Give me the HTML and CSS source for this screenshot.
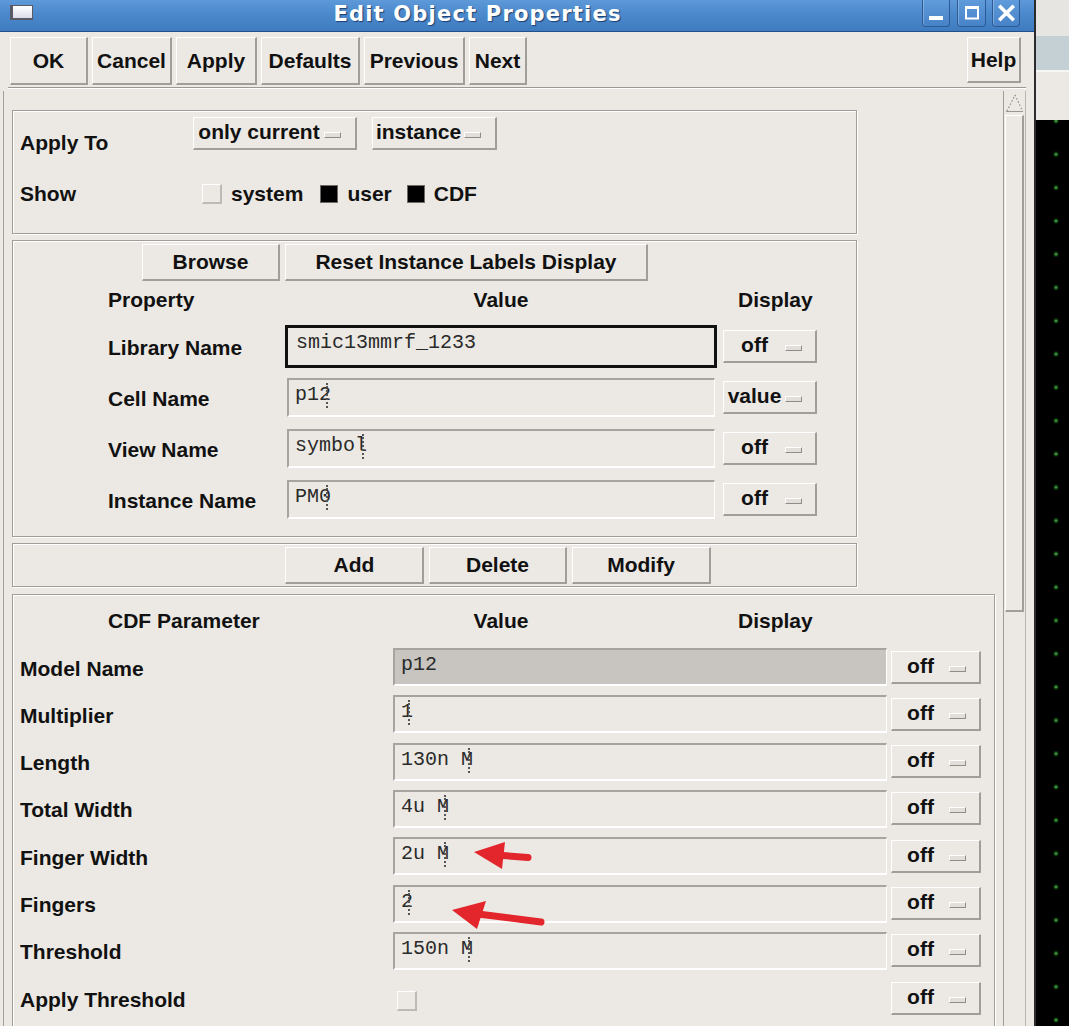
FILE: index.html
```html
<!DOCTYPE html>
<html>
<head>
<meta charset="utf-8">
<title>Edit Object Properties</title>
<link rel="stylesheet" href="styles.css">
</head>
<body>
<div class="screen">
  <div class="window">
    <div class="titlebar">
      <div class="win-icon"></div>
      <div class="title">Edit Object Properties</div>
      <div class="wm-btns">
        <div class="wm-btn wm-min"><svg width="27" height="27" viewBox="0 0 27 27"><rect x="6" y="16" width="14" height="4" fill="#fff"/></svg></div>
        <div class="wm-btn wm-max"><svg width="28" height="27" viewBox="0 0 28 27"><rect x="8" y="7.5" width="12" height="11" fill="none" stroke="#fff" stroke-width="2"/><rect x="7" y="6" width="14" height="3" fill="#fff"/></svg></div>
        <div class="wm-btn wm-close"><svg width="27" height="27" viewBox="0 0 27 27"><path d="M7.5 7 L19.5 19 M19.5 7 L7.5 19" stroke="#fff" stroke-width="3.6" stroke-linecap="square"/></svg></div>
      </div>
    </div>

    <div class="toolbar">
      <div class="btn tb b-ok">OK</div>
      <div class="btn tb b-cancel">Cancel</div>
      <div class="btn tb b-apply">Apply</div>
      <div class="btn tb b-def">Defaults</div>
      <div class="btn tb b-prev">Previous</div>
      <div class="btn tb b-next">Next</div>
      <div class="spacer"></div>
      <div class="btn tb b-help">Help</div>
    </div>

    <div class="scrollarea">
      <div class="viewport">

        <div class="frame f1">
          <div class="apply-row">
            <div class="lbl lbl-apply">Apply To</div>
            <div class="opt opt-only"><span class="opt-text">only current</span><span class="ind"></span></div>
            <div class="opt opt-inst"><span class="opt-text">instance</span><span class="ind"></span></div>
          </div>
          <div class="show-row">
            <div class="lbl lbl-show">Show</div>
            <span class="chk chk-first"></span>
            <span class="chk-text">system</span>
            <span class="chk on on-user"></span>
            <span class="chk-text">user</span>
            <span class="chk on on-cdf"></span>
            <span class="chk-text">CDF</span>
          </div>
        </div>

        <div class="frame f2">
          <div class="btnrow2">
            <div class="btn b-browse">Browse</div>
            <div class="btn b-reset">Reset Instance Labels Display</div>
          </div>
          <div class="hdr">
            <div class="h1">Property</div>
            <div class="h2">Value</div>
            <div class="h3">Display</div>
          </div>
          <div class="pgrid">
            <div class="lbl">Library Name</div>
            <div class="fld focus">smic13mmrf_1233</div>
            <div class="opt opt-disp"><span class="opt-text">off</span><span class="ind"></span></div>

            <div class="lbl">Cell Name</div>
            <div class="fld">p12<span class="cur"></span></div>
            <div class="opt opt-disp"><span class="opt-text">value</span><span class="ind"></span></div>

            <div class="lbl">View Name</div>
            <div class="fld">symbol<span class="cur"></span></div>
            <div class="opt opt-disp"><span class="opt-text">off</span><span class="ind"></span></div>

            <div class="lbl">Instance Name</div>
            <div class="fld">PM0<span class="cur"></span></div>
            <div class="opt opt-disp"><span class="opt-text">off</span><span class="ind"></span></div>
          </div>
        </div>

        <div class="frame f3">
          <div class="btn b-add">Add</div>
          <div class="btn b-del">Delete</div>
          <div class="btn b-mod">Modify</div>
        </div>

        <div class="frame f4">
          <div class="hdr hdr4">
            <div class="h1">CDF Parameter</div>
            <div class="h2">Value</div>
            <div class="h3">Display</div>
          </div>
          <div class="cgrid">
            <div class="lbl">Model Name</div>
            <div class="fld disabled">p12</div>
            <div class="opt opt-cdf"><span class="opt-text">off</span><span class="ind"></span></div>

            <div class="lbl">Multiplier</div>
            <div class="fld">1<span class="cur"></span></div>
            <div class="opt opt-cdf"><span class="opt-text">off</span><span class="ind"></span></div>

            <div class="lbl">Length</div>
            <div class="fld">130n M<span class="cur"></span></div>
            <div class="opt opt-cdf"><span class="opt-text">off</span><span class="ind"></span></div>

            <div class="lbl">Total Width</div>
            <div class="fld">4u M<span class="cur"></span></div>
            <div class="opt opt-cdf"><span class="opt-text">off</span><span class="ind"></span></div>

            <div class="lbl">Finger Width</div>
            <div class="fld">2u M<span class="cur"></span></div>
            <div class="opt opt-cdf"><span class="opt-text">off</span><span class="ind"></span></div>

            <div class="lbl">Fingers</div>
            <div class="fld">2<span class="cur"></span></div>
            <div class="opt opt-cdf"><span class="opt-text">off</span><span class="ind"></span></div>

            <div class="lbl">Threshold</div>
            <div class="fld">150n M<span class="cur"></span></div>
            <div class="opt opt-cdf"><span class="opt-text">off</span><span class="ind"></span></div>

            <div class="lbl">Apply Threshold</div>
            <div class="chk-cell"><span class="chk"></span></div>
            <div class="opt opt-cdf"><span class="opt-text">off</span><span class="ind"></span></div>
          </div>
        </div>

      </div>
      <div class="vscroll">
        <div class="arrow-up">
          <svg width="19" height="20" viewBox="0 0 19 20"><path d="M10 2 L17.5 18 M2 18 L10 2" stroke="#8f8c87" stroke-width="1.2" stroke-dasharray="1.5 2" fill="none"/><path d="M1 18.5 H18" stroke="#9a9792" stroke-width="1"/></svg>
        </div>
        <div class="thumb"></div>
      </div>
    </div>
  </div>

  <div class="side">
    <div class="s-a"></div>
    <div class="s-b"></div>
    <div class="s-c"></div>
    <div class="s-d"></div>
  </div>
</div>

<svg class="overlay" width="1069" height="1026" viewBox="0 0 1069 1026">
  <line x1="528" y1="857.5" x2="496" y2="855" stroke="#e3262b" stroke-width="7" stroke-linecap="round"/>
  <polygon points="474,852 505,842 502,869" fill="#e3262b"/>
  <line x1="541" y1="922" x2="478" y2="914" stroke="#e3262b" stroke-width="7" stroke-linecap="round"/>
  <polygon points="452,910 486,901 477,929" fill="#e3262b"/>
</svg>
</body>
</html>
```

FILE: styles.css
```css
* { box-sizing: border-box; }

html, body {
  margin: 0;
  padding: 0;
}

body {
  width: 1069px;
  height: 1026px;
  overflow: hidden;
  background: #000;
  position: relative;
  font-family: "Liberation Sans", Arial, sans-serif;
  color: #111;
}

.screen {
  display: flex;
  width: 1069px;
  height: 1026px;
}

.window {
  width: 1036px;
  flex: none;
  display: flex;
  flex-direction: column;
  background: #ece9e4;
  border-right: 2px solid #2b2b2b;
  overflow: hidden;
}

/* ---------- title bar ---------- */
.titlebar {
  height: 32px;
  flex: none;
  display: flex;
  align-items: flex-start;
  background: linear-gradient(#5e9ad9 0%, #4b88cc 45%, #3f7bbf 100%);
  border-bottom: 1px solid #24508a;
}

.win-icon {
  margin: 5px 0 0 10px;
  width: 23px;
  height: 15px;
  background: linear-gradient(#ffffff, #dcdcec);
  border: 1px solid #5a5a66;
  border-left-width: 3px;
  border-bottom-width: 2px;
}

.title {
  flex: 1;
  text-align: center;
  color: #fff;
  font-family: "DejaVu Sans", "Liberation Sans", sans-serif;
  font-weight: bold;
  font-size: 21px;
  letter-spacing: 1.2px;
  line-height: 28px;
  text-shadow: 1px 1px 1px #1c3f6e;
}

.wm-btns {
  display: flex;
  margin-right: 14px;
}

.wm-btn {
  height: 27px;
  border: 1px solid #2c5a95;
  border-top: none;
  border-radius: 0 0 4px 4px;
  background: linear-gradient(#609cdb, #4682c6);
  box-shadow: inset 1px 0 0 rgba(255, 255, 255, 0.25);
}

.wm-btn svg { display: block; }

.wm-min { width: 28px; }
.wm-max { width: 29px; margin-left: 7px; }
.wm-close { width: 28px; margin-left: 6px; }

/* ---------- buttons ---------- */
.btn {
  display: flex;
  align-items: center;
  justify-content: center;
  border-style: solid;
  border-width: 1px 2px 2px 1px;
  border-color: #fff #a19e99 #a19e99 #fff;
  background: #ece9e4;
  font-weight: bold;
  font-size: 21px;
  color: #111;
  white-space: nowrap;
}

.toolbar {
  flex: none;
  display: flex;
  gap: 4px;
  margin: 0 8px;
  padding: 5px 5px 2px 2px;
  border-bottom: 1px solid #9c9994;
  box-shadow: 0 1px 0 #fff;
}

.tb { height: 48px; }
.b-ok { width: 78px; }
.b-cancel { width: 80px; }
.b-apply { width: 81px; }
.b-def { width: 99px; }
.b-prev { width: 101px; }
.b-next { width: 58px; }
.b-help { width: 54px; height: 46px; }

.spacer { flex: 1; }

/* ---------- scroll area ---------- */
.scrollarea {
  flex: 1;
  min-height: 0;
  display: flex;
  margin-top: 3px;
  padding-right: 8px;
}

.viewport {
  flex: 1;
  min-width: 0;
  overflow: hidden;
  margin-left: 3px;
  border-left: 1px solid #a3a09b;
  padding: 19px 0 0 8px;
}

.vscroll {
  width: 23px;
  flex: none;
  border-left: 1px solid #a09d98;
  border-right: 1px solid #b9b6b1;
  padding: 2px 1px;
  display: flex;
  flex-direction: column;
  gap: 2px;
}

.arrow-up {
  height: 20px;
}

.arrow-up svg { display: block; }

.thumb {
  height: 497px;
  border-style: solid;
  border-width: 1px 2px 2px 1px;
  border-color: #fff #a19e99 #a19e99 #fff;
}

/* ---------- frames ---------- */
.frame {
  border: 1px solid #a19e99;
  box-shadow: inset 1px 1px 0 #fff, 1px 1px 0 #fff;
}

.lbl {
  font-weight: bold;
  font-size: 21px;
  line-height: 22px;
  white-space: nowrap;
}

.f1 {
  width: 845px;
  height: 124px;
  padding: 6px 0 0 7px;
  margin-bottom: 6px;
}

.apply-row {
  display: flex;
  align-items: flex-start;
}

.lbl-apply {
  width: 173px;
  margin-top: 15px;
}

.show-row {
  display: flex;
  align-items: center;
  margin-top: 28px;
}

.lbl-show { width: 173px; }

.chk {
  display: inline-block;
  width: 20px;
  height: 20px;
  border-style: solid;
  border-width: 1px 2px 2px 1px;
  border-color: #fff #bdbab5 #bdbab5 #fff;
  background: #ece9e4;
  flex: none;
}

.chk.on {
  width: 18px;
  height: 18px;
  background: #000;
  border: 1px solid #6d6a66;
}

.chk-first { margin-left: 9px; }
.on-user { margin-left: 17px; }
.on-cdf { margin-left: 15px; }

.chk-text {
  font-weight: bold;
  font-size: 21px;
  margin-left: 9px;
}

/* option menu buttons */
.opt {
  height: 33px;
  display: flex;
  align-items: center;
  border-style: solid;
  border-width: 1px 2px 2px 1px;
  border-color: #fff #a19e99 #a19e99 #fff;
  font-weight: bold;
  font-size: 21px;
  white-space: nowrap;
}

.opt-text {
  flex: 1;
  text-align: center;
  line-height: 22px;
  margin-top: -2px;
}

.ind {
  flex: none;
  width: 17px;
  height: 6px;
  margin: 4px 13px 0 0;
  border-style: solid;
  border-width: 1px;
  border-color: #fff #8f8c87 #8f8c87 #fff;
  background: #e2dfda;
}

.opt-only { width: 164px; }
.opt-only .ind { margin-right: 14px; }
.opt-inst { width: 125px; margin-left: 15px; }
.opt-inst .ind { margin-right: 14px; }

/* frame 2 */
.f2 {
  width: 845px;
  height: 297px;
  padding-top: 3px;
  margin-bottom: 6px;
}

.btnrow2 {
  display: flex;
  gap: 5px;
  margin-left: 129px;
}

.b-browse { width: 138px; height: 37px; }
.b-reset { width: 363px; height: 37px; }

.hdr {
  display: flex;
  margin-top: 9px;
  padding-left: 95px;
  height: 20px;
  line-height: 20px;
  font-weight: bold;
  font-size: 21px;
  white-space: nowrap;
}

.hdr .h1 { width: 179px; }
.hdr .h2 { width: 428px; text-align: center; }
.hdr .h3 { padding-left: 23px; }

.pgrid {
  display: grid;
  grid-template-columns: 171px 428px 94px;
  grid-auto-rows: 39px;
  column-gap: 8px;
  row-gap: 12px;
  align-items: center;
  padding-left: 95px;
  margin-top: 17px;
}

.pgrid .lbl { margin-top: 3px; }

/* text fields */
.fld {
  height: 39px;
  border-style: solid;
  border-width: 2px 1px 2px 2px;
  border-color: #a7a49f #fff #fff #a7a49f;
  background: #ece9e4;
  font-family: "Liberation Mono", "Courier New", monospace;
  font-size: 20px;
  line-height: 24px;
  color: #2a2a2a;
  padding: 3px 0 0 6px;
  white-space: nowrap;
  overflow: hidden;
}

.cgrid .fld { height: 38px; }

.fld.focus {
  border: 1px solid #111;
  box-shadow: 0 0 0 2px #111;
  padding-left: 8px;
}

.fld.disabled {
  background: #c8c5c1;
}

.cur {
  display: inline-block;
  width: 0;
  height: 25px;
  border-left: 2px dotted #555;
  margin-left: -5px;
  vertical-align: -8px;
}

/* frame 3 */
.f3 {
  width: 845px;
  height: 44px;
  padding: 3px 0 0 272px;
  margin-bottom: 7px;
  display: flex;
  gap: 5px;
}

.b-add { width: 139px; height: 37px; }
.b-del { width: 138px; height: 37px; }
.b-mod { width: 139px; height: 37px; }

/* frame 4 */
.f4 {
  width: 983px;
  height: 460px;
  padding-top: 16px;
}

.hdr4 { margin-top: 0; }

.cgrid {
  display: grid;
  grid-template-columns: 369px 494px 90px;
  grid-auto-rows: 38px;
  column-gap: 4px;
  row-gap: 9.33px;
  align-items: center;
  padding-left: 7px;
  margin-top: 17px;
}

.cgrid .lbl { margin-top: 3px; }

.opt-cdf { width: 90px; }

.chk-cell {
  display: flex;
  align-items: center;
  padding: 6px 0 0 4px;
}

/* ---------- right strip ---------- */
.side {
  flex: 1;
  display: flex;
  flex-direction: column;
}

.s-a { height: 36px; background: #e7e5e1; flex: none; }
.s-b { height: 36px; background: #c4d0d4; border-bottom: 2px solid #f6f6f4; flex: none; }
.s-c { height: 48px; background: #ece9e4; flex: none; }
.s-d {
  flex: 1;
  background-color: #000;
  background-image: radial-gradient(circle, #7fe07f 0, #2f8a2f 1px, rgba(20, 80, 20, 0.5) 2px, transparent 3.5px);
  background-size: 33px 33.3px;
  background-position: 3.5px -15.6px;
}

/* ---------- annotation arrows ---------- */
.overlay {
  position: absolute;
  left: 0;
  top: 0;
  pointer-events: none;
}
```
